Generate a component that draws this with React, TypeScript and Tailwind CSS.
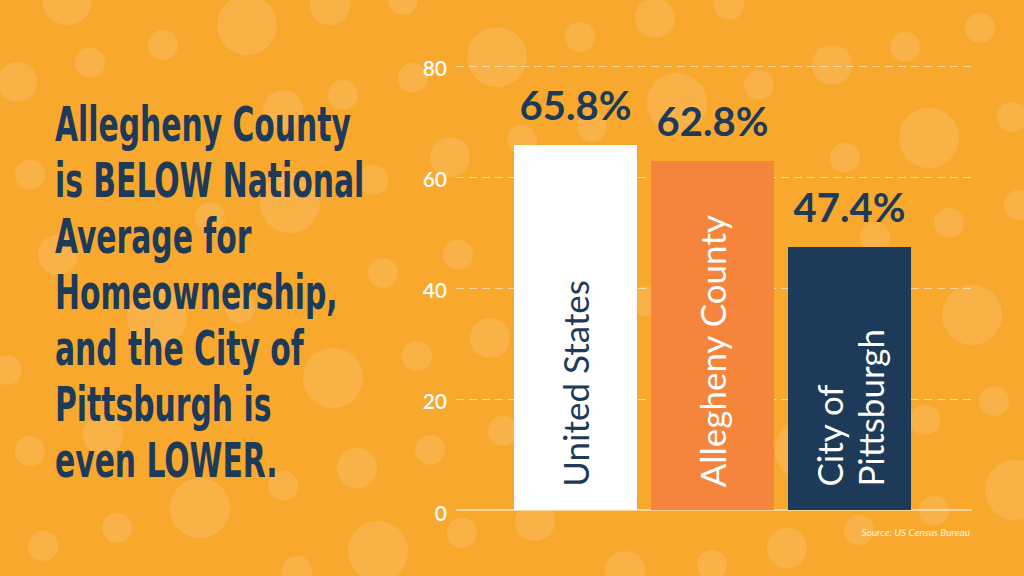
const bubbles: [number, number, number][] = [
  [247, 25, 30], [163, 45, 15], [90, 63, 15], [17, 82, 20], [330, 5, 20], [343, 95, 15],
  [497, 57, 30], [413, 78, 15], [67, 0, 25], [403, 0, 15], [290, 203, 30], [30, 175, 15],
  [373, 180, 15], [450, 157, 20], [210, 217, 15], [58, 255, 20], [458, 255, 15], [383, 273, 15],
  [283, 110, 20], [655, 18, 20], [580, 37, 15], [729, 5, 15], [677, 103, 30], [592, 127, 15],
  [759, 85, 15], [832, 65, 20], [905, 47, 15], [980, 28, 15], [929, 138, 30], [845, 158, 15],
  [1012, 117, 15], [1019, 205, 15], [949, 223, 15], [875, 237, 15], [522, 140, 15],
  [157, 318, 30], [7, 370, 15], [333, 378, 30], [417, 356, 15], [490, 338, 20], [103, 435, 20],
  [30, 451, 15], [430, 450, 15], [357, 468, 20], [200, 508, 30], [283, 486, 15], [117, 528, 15],
  [43, 546, 15], [378, 551, 30], [462, 533, 15], [297, 571, 15], [240, 308, 15], [503, 431, 15],
  [972, 315, 30], [994, 401, 15], [925, 420, 15], [1015, 490, 30], [934, 511, 15], [859, 530, 15],
  [787, 548, 20], [535, 521, 20], [712, 565, 15], [625, 571, 20], [645, 301, 15], [805, 450, 30],
];

const scale = 444 / 80;
const ticks = [80, 60, 40, 20, 0];

const bars = [
  { value: 65.8, lines: ["United States"], bar: "bg-white", text: "text-[#1d3a58]" },
  { value: 62.8, lines: ["Allegheny County"], bar: "bg-[#f5843c]", text: "text-white" },
  { value: 47.4, lines: ["City of", "Pittsburgh"], bar: "bg-[#1d3a58]", text: "text-white" },
];

export default function App() {
  return (
    <div className="relative h-[576px] w-[1024px] overflow-hidden bg-[#f9a82e] font-['Lato',sans-serif]">
      <svg className="absolute inset-0" width="1024" height="576" aria-hidden>
        {bubbles.map(([cx, cy, r], i) => (
          <circle key={i} cx={cx} cy={cy} r={r} fill="#ffffff" fillOpacity={0.12} />
        ))}
      </svg>

      <div className="relative flex">
        <div className="w-[400px] shrink-0 pl-[55px] pt-[96px]">
          <h1 className="origin-left scale-x-[0.69] whitespace-nowrap font-['DejaVu_Sans_Condensed','DejaVu_Sans',sans-serif] text-[48px] font-bold leading-[56px] text-[#1d3a58] [font-stretch:condensed]">
            Allegheny County
            <br />
            is BELOW National
            <br />
            Average for
            <br />
            Homeownership,
            <br />
            and the City of
            <br />
            Pittsburgh is
            <br />
            even LOWER.
          </h1>
        </div>

        <div className="pl-[56px] pt-[66px]">
          <div className="relative h-[444px] w-[516px]">
            {ticks.map((t) => (
              <div key={t} className="absolute left-0 right-0" style={{ top: (80 - t) * scale }}>
                {t === 0 ? (
                  <div className="h-[2px] -translate-y-1/2 bg-white/50" />
                ) : (
                  <div className="h-px bg-[repeating-linear-gradient(90deg,rgba(255,255,255,0.55)_0_8px,transparent_8px_13px)]" />
                )}
                <span className="absolute right-full mr-[9px] -translate-y-1/2 text-[21px] font-semibold leading-none text-white">
                  {t}
                </span>
              </div>
            ))}

            <div className="relative flex h-full items-end gap-[14px] pl-[58px]">
              {bars.map((b) => (
                <div key={b.value} className="flex h-full w-[123px] flex-col items-center justify-end">
                  <div className="mb-[20px] whitespace-nowrap text-[40px] font-bold leading-none text-[#1d3a58]">{b.value}%</div>
                  <div className={`flex w-full items-end justify-center pb-[23px] ${b.bar}`} style={{ height: b.value * scale }}>
                    <div className={`rotate-180 whitespace-nowrap text-[35px] leading-[41px] [writing-mode:vertical-rl] ${b.text}`}>
                      {b.lines.map((l, i) => (
                        <div key={i}>{l}</div>
                      ))}
                    </div>
                  </div>
                </div>
              ))}
            </div>
          </div>
          <p className="mt-[15px] w-[514px] text-right text-[10px] italic leading-[14px] text-white/85">Source: US Census Bureau</p>
        </div>
      </div>
    </div>
  );
}
